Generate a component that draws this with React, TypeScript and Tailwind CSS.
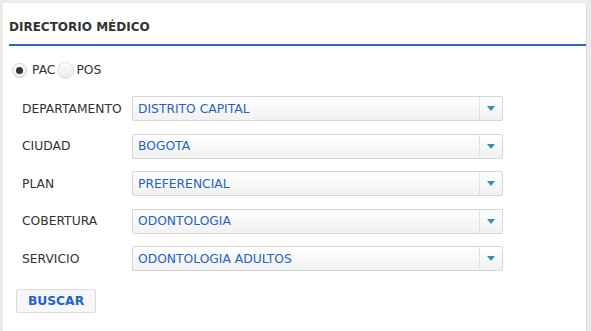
import React from "react";

const rows = [
  ["DEPARTAMENTO", "DISTRITO CAPITAL"],
  ["CIUDAD", "BOGOTA"],
  ["PLAN", "PREFERENCIAL"],
  ["COBERTURA", "ODONTOLOGIA"],
  ["SERVICIO", "ODONTOLOGIA ADULTOS"],
];

function Select({ value }: { value: string }) {
  return (
    <div className="flex h-[25px] w-[371px] border border-[#d6d6d6] rounded-[2px] bg-gradient-to-b from-white to-[#f1f1f1]">
      <div className="flex-1 flex items-center pl-[5px] text-[12.3px] text-[#1f63c6]">{value}</div>
      <div className="w-[23px] border-l border-[#e2e2e2] flex items-center justify-center">
        <svg width="8" height="5" viewBox="0 0 8 5">
          <path d="M0 0 H8 L4 5 Z" fill="#2f8ec0" />
        </svg>
      </div>
    </div>
  );
}

export default function App() {
  return (
    <div className="w-[591px] h-[331px] bg-[#ececec] pt-[3px] pl-[3px] overflow-hidden" style={{ fontFamily: '"DejaVu Sans", Verdana, sans-serif' }}>
      <div className="w-[584px] h-[328px] bg-white border-r border-[#dcdcdc]">
        <div className="pl-[6px] pt-[15px] h-[41px] text-[12px] font-bold text-[#333]">DIRECTORIO MÉDICO</div>
        <div className="ml-[6px] h-[2px] bg-[#2b6cc4]" />
        <div className="flex items-center pl-[9px] mt-[15px] text-[12.3px] text-[#333]">
          <div className="w-[15px] h-[15px] rounded-full border border-[#d0d0d0] bg-gradient-to-b from-white to-[#ececec] flex items-center justify-center">
            <div className="w-[7px] h-[7px] rounded-full bg-[#333]" />
          </div>
          <span className="ml-[5px]">PAC</span>
          <div className="ml-[2px] w-[17px] h-[17px] rounded-full border border-[#e0e0e0] bg-gradient-to-b from-white to-[#e8e8e8]" />
          <span className="ml-[2px]">POS</span>
        </div>
        <div className="flex flex-col gap-[12.5px] mt-[17px] pl-[19px]">
          {rows.map(([l, v]) => (
            <div key={l} className="flex items-center">
              <div className="w-[110px] text-[12.3px] text-[#333]">{l}</div>
              <Select value={v} />
            </div>
          ))}
        </div>
        <div className="mt-[18px] ml-[13px] w-[80px] h-[24px] border border-[#dcdcdc] rounded-[2px] bg-[#f6f6f6] flex items-center justify-center text-[12.3px] font-bold text-[#1f63c6]">
          BUSCAR
        </div>
      </div>
    </div>
  );
}
